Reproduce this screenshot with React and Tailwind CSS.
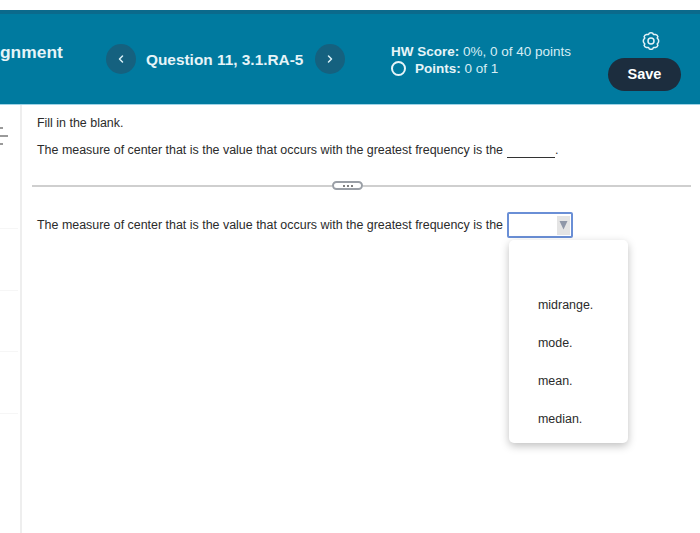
import React from "react";
import { ChevronLeft, ChevronRight } from "lucide-react";

const SENTENCE = "The measure of center that is the value that occurs with the greatest frequency is the";
const OPTIONS = ["midrange.", "mode.", "mean.", "median."];

function NavButton({ children }) {
  return (
    <div className="flex h-[30px] w-[30px] items-center justify-center rounded-full bg-[#15617f] text-[#d9f0f7]">
      {children}
    </div>
  );
}

function GearIcon() {
  return (
    <svg width="20" height="20" viewBox="0 0 20 20" fill="none" stroke="#e4f3f8" strokeWidth="1.5" strokeLinejoin="round">
      <path d="M8.3 2.2 Q10 1.2 11.7 2.2 L12.4 3.5 L14.6 3.5 Q16.4 3.9 16.9 5.6 L16.2 7 L17.4 8.6 Q18 10 17.4 11.4 L16.2 13 L16.9 14.4 Q16.4 16.1 14.6 16.5 L12.4 16.5 L11.7 17.8 Q10 18.8 8.3 17.8 L7.6 16.5 L5.4 16.5 Q3.6 16.1 3.1 14.4 L3.8 13 L2.6 11.4 Q2 10 2.6 8.6 L3.8 7 L3.1 5.6 Q3.6 3.9 5.4 3.5 L7.6 3.5 Z" />
      <circle cx="10" cy="10" r="3" />
    </svg>
  );
}

function Header() {
  return (
    <header className="flex h-[95px] items-start border-t-4 border-b border-t-[#0b6a8c] border-b-[#9fd3e6] bg-[#007a9f] text-[#e6f4f8]">
      <div className="mt-[28px] w-[106px] text-[17.4px] font-bold leading-5">gnment</div>
      <div className="mt-[30px] flex items-center">
        <NavButton>
          <ChevronLeft size={12} strokeWidth={3} />
        </NavButton>
        <div className="mt-[1px] ml-[10px] w-[169px] text-[15.4px] font-bold leading-5">Question 11, 3.1.RA-5</div>
        <NavButton>
          <ChevronRight size={12} strokeWidth={3} />
        </NavButton>
      </div>
      <div className="ml-[46px] mt-[29px] w-[217px] text-[13.5px] leading-[17px] text-[#d6edf4]">
        <div>
          <span className="font-bold text-[#e6f4f8]">HW Score:</span> 0%, 0 of 40 points
        </div>
        <div className="flex items-center">
          <span className="mr-[9px] h-[15px] w-[15px] rounded-full border-2 border-[#e6f4f8]" />
          <span>
            <span className="font-bold text-[#e6f4f8]">Points:</span> 0 of 1
          </span>
        </div>
      </div>
      <div className="mt-[17px] flex w-[74px] flex-col">
        <div className="ml-[33px]">
          <GearIcon />
        </div>
        <div className="mt-[7px] flex h-[33px] w-[73px] items-center justify-center rounded-full bg-[#1c2d3e] text-[14.5px] font-bold text-white">
          Save
        </div>
      </div>
    </header>
  );
}

function Divider() {
  return (
    <div className="mt-[23px] flex items-center pr-[9px] pl-[10px]">
      <div className="h-[2px] w-[300px] bg-[#cfcfcf]" />
      <div className="flex h-[9px] w-[31px] items-center justify-center gap-[2px] rounded-full border-2 border-[#9a9fa6] bg-white">
        <span className="h-[2px] w-[2px] rounded-full bg-[#555]" />
        <span className="h-[2px] w-[2px] rounded-full bg-[#555]" />
        <span className="h-[2px] w-[2px] rounded-full bg-[#555]" />
      </div>
      <div className="h-[2px] flex-1 bg-[#cfcfcf]" />
    </div>
  );
}

function Sidebar() {
  return (
    <aside className="relative w-[22px] shrink-0 border-r-2 border-[#eeeeee]">
      <div className="mt-[22px] flex flex-col items-start gap-[6px]">
        <span className="h-[2px] w-[3px] bg-[#9a9a9a]" />
        <span className="h-[2px] w-[8px] bg-[#9a9a9a]" />
        <span className="h-[2px] w-[3px] bg-[#9a9a9a]" />
      </div>
      <div className="mt-[83px] h-px w-[18px] bg-[#f6f6f6]" />
      <div className="mt-[61px] h-px w-[18px] bg-[#f6f6f6]" />
      <div className="mt-[60px] h-px w-[18px] bg-[#f6f6f6]" />
      <div className="mt-[61px] h-px w-[18px] bg-[#f6f6f6]" />
    </aside>
  );
}

export default function App() {
  return (
    <div className="h-[533px] w-[700px] overflow-hidden bg-white font-['Liberation_Sans',Arial,sans-serif] text-[#2b2b2b]">
      <div className="h-[10px]" />
      <Header />
      <div className="flex h-[428px]">
        <Sidebar />
        <main className="min-w-0 flex-1">
          <p className="mt-[11px] pl-[15px] text-[12.45px] leading-[15px]">Fill in the blank.</p>
          <p className="mt-[12px] flex items-end pl-[15px] text-[12.45px] leading-[15px]">
            {SENTENCE}
            <span className="ml-[4px] inline-block h-[13px] w-[48px] border-b border-[#333]" />
            <span>.</span>
          </p>
          <Divider />
          <div className="relative mt-[22px] flex items-center pl-[15px] text-[12.45px] leading-[15px]">
            {SENTENCE}
            <div className="ml-[4px] flex h-[26px] w-[66px] items-center justify-end rounded-[2px] border-2 border-[#6a8fd6] bg-white pr-[1px]">
              <div className="flex h-[19px] w-[13px] items-center justify-center bg-[#e4e4e4]">
                <svg width="9" height="10" viewBox="0 0 9 10">
                  <path d="M0.5 1 H8.5 L4.5 9.5 Z" fill="#8f97a8" />
                </svg>
              </div>
            </div>
            <ul className="absolute top-[28px] left-[487px] flex h-[203px] w-[119px] flex-col gap-[23px] rounded-[5px] bg-white pt-[58px] pl-[29px] text-[12.45px] shadow-[0_3px_9px_rgba(0,0,0,0.25)]">
              {OPTIONS.map((option) => (
                <li key={option}>{option}</li>
              ))}
            </ul>
          </div>
        </main>
      </div>
    </div>
  );
}
